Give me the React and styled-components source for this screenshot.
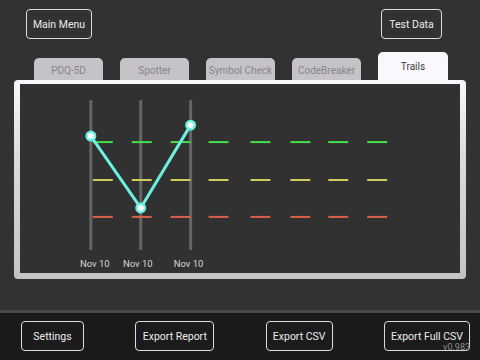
import React from 'react';
import styled, { createGlobalStyle } from 'styled-components';

const GlobalStyle = createGlobalStyle`
  html, body {
    margin: 0;
    padding: 0;
    background-color: #323232;
  }
  * {
    box-sizing: border-box;
  }
`;

const Page = styled.div`
  display: flex;
  flex-direction: column;
  width: 480px;
  height: 360px;
  overflow: hidden;
  background-color: #323232;
  font-family: Roboto, 'Liberation Sans', sans-serif;
  position: relative;
`;

const TopBar = styled.div`
  display: flex;
  justify-content: space-between;
  padding: 9px 38px 0 26px;
`;

const OutlineButton = styled.button`
  height: 30px;
  width: ${p => p.$width}px;
  padding: 0;
  border: 1.5px solid #dcdcdc;
  border-radius: 4px;
  background: transparent;
  color: #ececec;
  font-family: inherit;
  font-size: 10.5px;
  font-weight: 400;
  cursor: pointer;
`;

const TabRow = styled.div`
  display: flex;
  align-items: flex-end;
  gap: 17px;
  height: 28px;
  margin-top: 13px;
  padding-left: 34px;
  position: relative;
  z-index: 1;
`;

const Tab = styled.div`
  width: ${p => (p.$active ? 70 : 69)}px;
  height: ${p => (p.$active ? 32 : 22)}px;
  margin-bottom: ${p => (p.$active ? -4 : 0)}px;
  display: flex;
  align-items: ${p => (p.$active ? 'flex-start' : 'center')};
  justify-content: center;
  padding-top: ${p => (p.$active ? 9 : 2)}px;
  border-radius: 5px 5px 0 0;
  background-color: ${p => (p.$active ? '#fbf8fd' : '#c5c3c7')};
  color: ${p => (p.$active ? '#3a3a3a' : '#85858a')};
  font-size: 10px;
  white-space: nowrap;
`;

const Panel = styled.div`
  margin: 0 14px;
  height: 199px;
  padding: 4px 6px 6px 6px;
  border-radius: 4px;
  background: linear-gradient(to bottom, #fbf8fd 0%, #dcd9de 40%, #c6c3c7 100%);
`;

const PanelInner = styled.div`
  width: 100%;
  height: 100%;
  background-color: #313131;
`;

const Spacer = styled.div`
  flex: 1;
`;

const BottomBar = styled.div`
  height: 50px;
  border-top: 3px solid #4a4a4a;
  background-color: #1b1b1b;
  display: flex;
  justify-content: space-between;
  padding: 8px 10px 0 21px;
`;

const Version = styled.div`
  position: absolute;
  right: 10px;
  bottom: 8px;
  color: #8e8e8e;
  font-size: 9px;
`;

const dashXs = [92, 131, 170, 208, 250, 290, 328, 367];
const levels = [
  { y: 142, color: '#46e04a' },
  { y: 180, color: '#cfcc5c' },
  { y: 217, color: '#d9604a' },
];
const columns = [90, 140, 190];
const points = [
  [90, 136],
  [140, 208],
  [190, 125],
];
const labels = [94, 137, 188];

const TrailsChart = () => (
  <svg width="100%" height="100%" viewBox="19 84 441 189">
    {columns.map(x => (
      <line key={x} x1={x} y1={100} x2={x} y2={250} stroke="#666" strokeWidth="3" />
    ))}
    {levels.map(l =>
      dashXs.map(x => (
        <line key={`${l.y}-${x}`} x1={x} y1={l.y} x2={x + 20} y2={l.y} stroke={l.color} strokeWidth="2" />
      ))
    )}
    <polyline
      points={points.map(p => p.join(',')).join(' ')}
      fill="none"
      stroke="#6ef0e0"
      strokeWidth="3"
      strokeLinejoin="round"
    />
    {points.map(([x, y]) => (
      <g key={x}>
        <circle cx={x} cy={y} r="5.5" fill="#6ef0e0" />
        <circle cx={x} cy={y} r="3" fill="#ffffff" />
      </g>
    ))}
    {labels.map((x, i) => (
      <text
        key={i}
        x={x}
        y={267.5}
        textAnchor="middle"
        fill="#d6d6d6"
        fontSize="9.5"
        fontFamily="Roboto, 'Liberation Sans', sans-serif"
      >
        Nov 10
      </text>
    ))}
  </svg>
);

const tabs = ['PDQ-5D', 'Spotter', 'Symbol Check', 'CodeBreaker', 'Trails'];

const App = () => (
  <Page>
    <GlobalStyle />
    <TopBar>
      <OutlineButton $width={66}>Main Menu</OutlineButton>
      <OutlineButton $width={61}>Test Data</OutlineButton>
    </TopBar>
    <TabRow>
      {tabs.map(t => (
        <Tab key={t} $active={t === 'Trails'}>{t}</Tab>
      ))}
    </TabRow>
    <Panel>
      <PanelInner>
        <TrailsChart />
      </PanelInner>
    </Panel>
    <Spacer />
    <BottomBar>
      <OutlineButton $width={63}>Settings</OutlineButton>
      <OutlineButton $width={79}>Export Report</OutlineButton>
      <OutlineButton $width={67}>Export CSV</OutlineButton>
      <OutlineButton $width={86}>Export Full CSV</OutlineButton>
    </BottomBar>
    <Version>v0.983</Version>
  </Page>
);

export default App;
